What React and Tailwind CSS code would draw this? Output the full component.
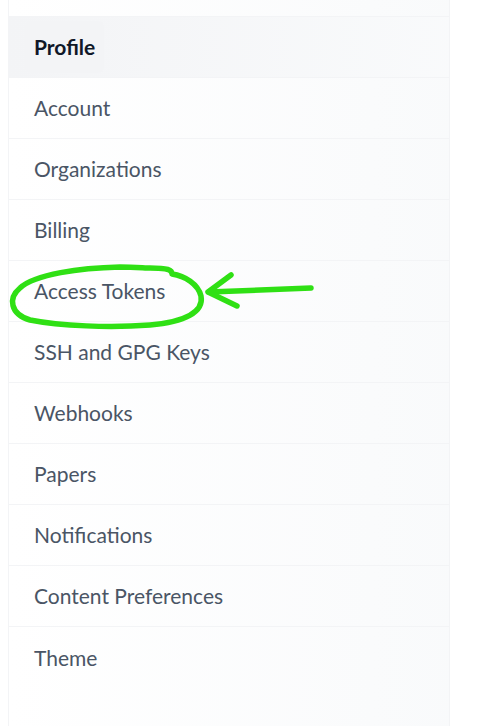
import React from "react";

const items = [
  "Account",
  "Organizations",
  "Billing",
  "Access Tokens",
  "SSH and GPG Keys",
  "Webhooks",
  "Papers",
  "Notifications",
  "Content Preferences",
  "Theme",
];

const App = () => {
  return (
    <div className="relative min-h-screen bg-white font-['Lato',sans-serif] overflow-hidden">
      <div className="ml-[8px] w-[442px] min-h-[726px] border-x border-gray-100 bg-gradient-to-r from-white to-gray-50">
        <div className="h-[17px] border-b border-gray-100" />
        {/* Active item */}
        <div className="h-[61px] border-b border-gray-100 bg-gradient-to-r from-gray-100 to-gray-50 flex items-center px-[16px]">
          <span className="px-[9px] py-[10px] rounded-md bg-gray-100 text-[21px] font-bold text-gray-900">
            Profile
          </span>
        </div>
        {items.map((item, i) => (
          <div
            key={item}
            className={`h-[61px] flex items-center pl-[25px] text-[21px] text-gray-600 ${
              i < items.length - 1 ? "border-b border-gray-100" : ""
            }`}
          >
            {item}
          </div>
        ))}
      </div>

      {/* hand-drawn annotation */}
      <svg
        className="absolute left-0 top-0 pointer-events-none"
        width="477"
        height="726"
        fill="none"
        stroke="#2fe014"
        strokeWidth="5.5"
        strokeLinecap="round"
        strokeLinejoin="round"
      >
        <path d="M150 268 C 168 268, 172 270, 172 274 C 185 276, 198 284, 201 296 C 204 312, 185 322, 150 325 C 110 328, 60 326, 30 320 C 10 314, 8 298, 20 288 C 35 274, 80 268, 120 267 C 135 267, 145 268, 150 268" />
        <path d="M311 288 L 209 292" />
        <path d="M231 275 L 208 292 L 237 306" />
      </svg>
    </div>
  );
};

export default App;
